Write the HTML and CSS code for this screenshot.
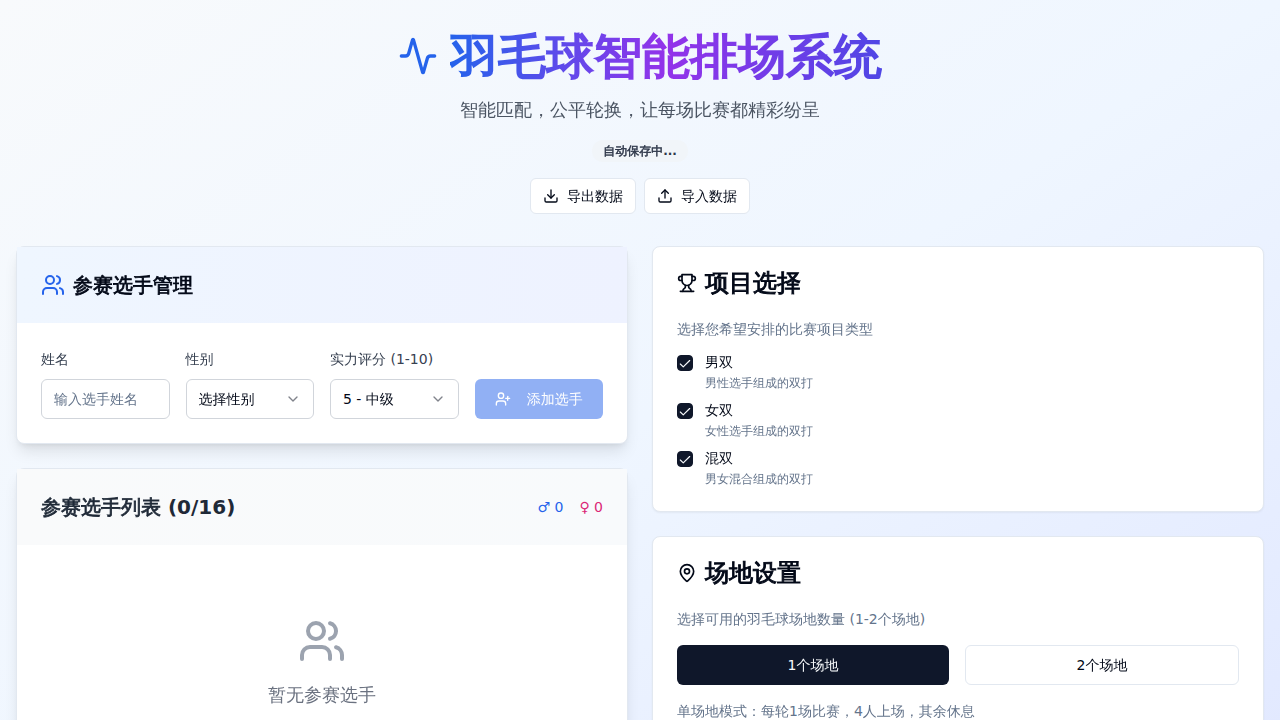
FILE: index.html
```html
<!DOCTYPE html>
<html lang="zh-CN">
<head>
    <meta charset="utf-8">
    <meta name="viewport" content="width=device-width, initial-scale=1">
    <title>羽毛球智能排场系统</title>
    <link rel="stylesheet" href="styles.css">
</head>
<body>
<div class="page">
    <header class="hero">
        <h1>
            <svg class="icon icon-xl blue" viewBox="0 0 24 24"><path d="M22 12h-2.48a2 2 0 0 0-1.93 1.46l-2.35 8.36a.25.25 0 0 1-.48 0L9.24 2.18a.25.25 0 0 0-.48 0l-2.35 8.36A2 2 0 0 1 4.49 12H2"/></svg>
            <span class="title-text heavy">羽毛球智能排场系统</span>
        </h1>
        <p class="subtitle">智能匹配，公平轮换，让每场比赛都精彩纷呈</p>
        <div class="badge"><span class="heavy">自动保存中</span>...</div>
        <div class="actions">
            <button type="button" class="btn btn-sm">
                <svg class="icon" viewBox="0 0 24 24"><path d="M21 15v4a2 2 0 0 1-2 2H5a2 2 0 0 1-2-2v-4"/><path d="m7 10 5 5 5-5"/><path d="M12 15V3"/></svg>
                导出数据
            </button>
            <button type="button" class="btn btn-sm">
                <svg class="icon" viewBox="0 0 24 24"><path d="M21 15v4a2 2 0 0 1-2 2H5a2 2 0 0 1-2-2v-4"/><path d="m17 8-5-5-5 5"/><path d="M12 3v12"/></svg>
                导入数据
            </button>
        </div>
    </header>

    <main class="columns">
        <div class="column">
            <section class="card raised">
                <div class="card-bar bar-blue">
                    <h2>
                        <svg class="icon icon-lg blue" viewBox="0 0 24 24"><path d="M16 21v-2a4 4 0 0 0-4-4H6a4 4 0 0 0-4 4v2"/><circle cx="9" cy="7" r="4"/><path d="M22 21v-2a4 4 0 0 0-3-3.87"/><path d="M16 3.13a4 4 0 0 1 0 7.75"/></svg>
                        <span class="heavy">参赛选手管理</span>
                    </h2>
                </div>
                <form class="player-form">
                    <div class="field">
                        <label for="name">姓名</label>
                        <input type="text" id="name" placeholder="输入选手姓名">
                    </div>
                    <div class="field">
                        <label for="gender">性别</label>
                        <select id="gender">
                            <option>选择性别</option>
                            <option>男</option>
                            <option>女</option>
                        </select>
                    </div>
                    <div class="field">
                        <label for="skill">实力评分 (1-10)</label>
                        <select id="skill">
                            <option>5 - 中级</option>
                        </select>
                    </div>
                    <button type="submit" class="btn btn-add" disabled>
                        <svg class="icon" viewBox="0 0 24 24"><path d="M16 21v-2a4 4 0 0 0-4-4H6a4 4 0 0 0-4 4v2"/><circle cx="9" cy="7" r="4"/><path d="M19 8v6"/><path d="M22 11h-6"/></svg>
                        添加选手
                    </button>
                </form>
            </section>

            <section class="card raised">
                <div class="card-bar bar-gray">
                    <h2><span><span class="heavy">参赛选手列表</span> (0/16)</span></h2>
                    <div class="counts">
                        <span class="male">♂ 0</span>
                        <span class="female">♀ 0</span>
                    </div>
                </div>
                <div class="empty">
                    <svg class="icon icon-2xl" viewBox="0 0 24 24"><path d="M16 21v-2a4 4 0 0 0-4-4H6a4 4 0 0 0-4 4v2"/><circle cx="9" cy="7" r="4"/><path d="M22 21v-2a4 4 0 0 0-3-3.87"/><path d="M16 3.13a4 4 0 0 1 0 7.75"/></svg>
                    <p>暂无参赛选手</p>
                </div>
            </section>
        </div>

        <div class="column">
            <section class="card panel">
                <h3>
                    <svg class="icon icon-md" viewBox="0 0 24 24"><path d="M6 9H4.5a2.5 2.5 0 0 1 0-5H6"/><path d="M18 9h1.5a2.5 2.5 0 0 0 0-5H18"/><path d="M4 22h16"/><path d="M10 14.66V17c0 .55-.47.98-.97 1.21C7.85 18.75 7 20.24 7 22"/><path d="M14 14.66V17c0 .55.47.98.97 1.21C16.15 18.75 17 20.24 17 22"/><path d="M18 2H6v7a6 6 0 0 0 12 0V2Z"/></svg>
                    <span class="heavy">项目选择</span>
                </h3>
                <p class="hint">选择您希望安排的比赛项目类型</p>
                <div class="events">
                    <div class="event">
                        <input type="checkbox" id="md" checked>
                        <div>
                            <label for="md">男双</label>
                            <p>男性选手组成的双打</p>
                        </div>
                    </div>
                    <div class="event">
                        <input type="checkbox" id="wd" checked>
                        <div>
                            <label for="wd">女双</label>
                            <p>女性选手组成的双打</p>
                        </div>
                    </div>
                    <div class="event">
                        <input type="checkbox" id="xd" checked>
                        <div>
                            <label for="xd">混双</label>
                            <p>男女混合组成的双打</p>
                        </div>
                    </div>
                </div>
            </section>

            <section class="card panel">
                <h3>
                    <svg class="icon icon-md" viewBox="0 0 24 24"><path d="M20 10c0 4.993-5.539 10.193-7.399 11.799a1 1 0 0 1-1.202 0C9.539 20.193 4 14.993 4 10a8 8 0 0 1 16 0"/><circle cx="12" cy="10" r="3"/></svg>
                    <span class="heavy">场地设置</span>
                </h3>
                <p class="hint">选择可用的羽毛球场地数量 (1-2个场地)</p>
                <div class="courts">
                    <button type="button" class="btn active">1个场地</button>
                    <button type="button" class="btn">2个场地</button>
                </div>
                <p class="hint">单场地模式：每轮1场比赛，4人上场，其余休息</p>
            </section>
        </div>
    </main>
</div>
</body>
</html>
```
FILE: styles.css
```css
* {
    box-sizing: border-box;
    margin: 0;
    padding: 0;
}

body {
    font-family: "DejaVu Sans", "WenQuanYi Zen Hei", "Noto Sans CJK SC", sans-serif;
    font-size: 16px;
    line-height: 24px;
    color: #020817;
}

input, select, button {
    font: inherit;
    font-size: 14px;
    line-height: 20px;
    color: inherit;
}

.page {
    min-height: 100vh;
    padding: 32px 16px;
    background: linear-gradient(to bottom right, #f8fafc, #eff6ff, #e0e7ff);
}

.icon {
    width: 16px;
    height: 16px;
    flex-shrink: 0;
    fill: none;
    stroke: currentColor;
    stroke-width: 2;
    stroke-linecap: round;
    stroke-linejoin: round;
}

.icon-md {
    width: 20px;
    height: 20px;
}

.icon-lg {
    width: 24px;
    height: 24px;
}

.icon-xl {
    width: 40px;
    height: 40px;
}

.icon-2xl {
    width: 48px;
    height: 48px;
}

.blue {
    color: #2563eb;
}

/* the chinese font has no bold weight */
.heavy {
    -webkit-text-stroke: 0.04em currentColor;
}

/* header */
.hero {
    display: flex;
    flex-direction: column;
    align-items: center;
    gap: 16px;
    margin-bottom: 32px;
    text-align: center;
}

.hero h1 {
    display: flex;
    align-items: center;
    gap: 12px;
    font-size: 48px;
    line-height: 48px;
    font-weight: bold;
}

.title-text {
    background: linear-gradient(to right, #2563eb, #9333ea, #4f46e5);
    -webkit-background-clip: text;
    background-clip: text;
    color: transparent;
}

.subtitle {
    font-size: 18px;
    line-height: 28px;
    color: #4b5563;
}

.badge {
    padding: 3px 11px;
    border-radius: 11px;
    background: #f1f5f9;
    font-size: 12px;
    line-height: 16px;
    font-weight: 600;
    color: #2d3648;
}

.actions {
    display: flex;
    gap: 8px;
}

.btn {
    display: flex;
    align-items: center;
    justify-content: center;
    gap: 8px;
    height: 40px;
    padding: 0 16px;
    border: 1px solid #e2e8f0;
    border-radius: 6px;
    background: #fff;
    font-weight: 500;
    white-space: nowrap;
}

.btn-sm {
    height: 36px;
    padding: 0 12px;
}

.btn.active {
    border: 0;
    background: #0f172a;
    color: #f8fafc;
}

/* cards */
.columns {
    display: grid;
    grid-template-columns: 1fr 1fr;
    gap: 24px;
}

.column {
    display: flex;
    flex-direction: column;
    gap: 24px;
    min-width: 0;
}

.card {
    border: 1px solid #e2e8f0;
    border-radius: 8px;
    background: #fff;
    box-shadow: 0 1px 2px rgba(0, 0, 0, 0.05);
}

.raised {
    box-shadow: 0 10px 15px -3px rgba(0, 0, 0, 0.1), 0 4px 6px -4px rgba(0, 0, 0, 0.1);
}

.card-bar {
    display: flex;
    align-items: center;
    justify-content: space-between;
    padding: 24px;
}

.card-bar h2 {
    display: flex;
    align-items: center;
    gap: 8px;
    font-size: 20px;
    line-height: 28px;
    font-weight: 600;
}

.bar-blue {
    background: linear-gradient(to right, #eff6ff, #eef2ff);
}

.bar-gray {
    background: linear-gradient(to right, #f9fafb, #f8fafc);
    color: #1f2937;
}

.player-form {
    display: grid;
    grid-template-columns: repeat(4, minmax(0, 1fr));
    align-items: end;
    gap: 16px;
    padding: 24px;
}

.field label {
    display: block;
    margin-bottom: 8px;
    font-size: 14px;
    line-height: 24px;
    font-weight: 500;
    color: #374151;
    white-space: nowrap;
}

.field input,
.field select {
    display: block;
    width: 100%;
    height: 40px;
    padding: 0 12px;
    border: 1px solid #d1d5db;
    border-radius: 6px;
    background: #fff;
}

.field input::placeholder {
    color: #64748b;
}

.field select {
    appearance: none;
    background: #fff url("data:image/svg+xml,%3Csvg xmlns='http://www.w3.org/2000/svg' width='16' height='16' viewBox='0 0 24 24' fill='none' stroke='%23020817' stroke-opacity='.5' stroke-width='2' stroke-linecap='round' stroke-linejoin='round'%3E%3Cpath d='m6 9 6 6 6-6'/%3E%3C/svg%3E") no-repeat right 12px center;
}

.btn-add {
    gap: 16px;
    border: 0;
    background: #2563eb;
    color: #fff;
    opacity: 0.5;
}

.counts {
    display: flex;
    gap: 16px;
    font-size: 14px;
    line-height: 20px;
}

.male {
    color: #2563eb;
}

.female {
    color: #db2777;
}

.empty {
    display: flex;
    flex-direction: column;
    align-items: center;
    gap: 16px;
    padding: 72px 24px 104px;
    font-size: 18px;
    line-height: 28px;
    color: #6b7280;
}

.empty .icon {
    color: #9ca3af;
}

/* right side */
.panel {
    display: flex;
    flex-direction: column;
    gap: 16px;
    padding: 24px;
}

.panel h3 {
    display: flex;
    align-items: center;
    gap: 8px;
    margin-bottom: 8px;
    font-size: 24px;
    line-height: 24px;
    font-weight: 600;
}

.hint {
    font-size: 14px;
    line-height: 20px;
    color: #64748b;
}

.events {
    display: flex;
    flex-direction: column;
    gap: 12px;
}

.event {
    display: flex;
    gap: 12px;
}

.event input {
    appearance: none;
    width: 16px;
    height: 16px;
    flex-shrink: 0;
    border: 1px solid #0f172a;
    border-radius: 4px;
}

.event input:checked {
    background: #0f172a url("data:image/svg+xml,%3Csvg xmlns='http://www.w3.org/2000/svg' width='14' height='14' viewBox='0 0 24 24' fill='none' stroke='%23f8fafc' stroke-width='2' stroke-linecap='round' stroke-linejoin='round'%3E%3Cpath d='M20 6 9 17l-5-5'/%3E%3C/svg%3E") no-repeat 0 1px;
}

.event label {
    display: block;
    margin-bottom: 6px;
    font-size: 14px;
    line-height: 14px;
    font-weight: 500;
}

.event p {
    font-size: 12px;
    line-height: 16px;
    color: #64748b;
}

.courts {
    display: flex;
    gap: 16px;
}

.courts .btn {
    flex: 1;
}
```
